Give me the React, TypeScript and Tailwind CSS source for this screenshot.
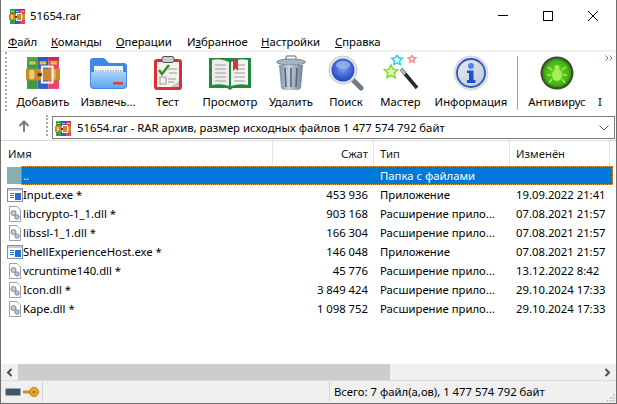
import type { ReactNode } from "react";

const FONT = "font-['Noto_Sans','Open_Sans',sans-serif]";

function RarIcon({ size }: { size: number }) {
  return (
    <svg width={size} height={size} viewBox="0 0 32 32" shapeRendering={size < 20 ? "crispEdges" : "auto"}>
      <rect x="1" y="1" width="10" height="30" fill="#3d9a45" />
      <rect x="11" y="1" width="10" height="30" fill="#2f5fc9" />
      <rect x="21" y="1" width="10" height="30" fill="#e8436a" />
      <rect x="1" y="1" width="10" height="3" fill="#4fa83f" />
      <rect x="11" y="1" width="10" height="3" fill="#3b4fb0" />
      <rect x="21" y="1" width="10" height="3" fill="#b8305a" />
      <rect x="3" y="5" width="6" height="3" fill="#e6c238" />
      <rect x="13" y="5" width="6" height="3" fill="#e6c238" />
      <rect x="23" y="5" width="6" height="3" fill="#e6c238" />
      <rect x="0" y="12" width="32" height="11" fill="#c98a2c" />
      <rect x="3" y="13" width="5" height="9" rx="2" fill="#eecb6c" />
      <rect x="24" y="13" width="4" height="9" fill="#e5b355" />
      <rect x="15" y="10" width="10" height="15" fill="none" stroke="#f4efe4" strokeWidth="2" />
      <rect x="11" y="16" width="4" height="3" fill="#5b3a12" />
    </svg>
  );
}

function FolderIcon() {
  return (
    <svg width="37" height="33" viewBox="0 0 37 33">
      <defs>
        <linearGradient id="fold" x1="0" y1="0" x2="0" y2="1">
          <stop offset="0" stopColor="#a9d3fb" />
          <stop offset="1" stopColor="#5ea6f2" />
        </linearGradient>
      </defs>
      <path d="M0 4 Q0 1 3 1 H13 Q15 1 17 4 L19 6 H34 Q37 6 37 9 V28 Q37 32 33 32 H4 Q0 32 0 28 Z" fill="#3f88e6" />
      <rect x="4" y="9" width="29" height="12" fill="#f3f6fa" />
      <path d="M5 14 H32" stroke="#9aa4b0" strokeWidth="1.5" strokeDasharray="1.5 1" />
      <path d="M1 15 H36 V28 Q36 31 33 31 H4 Q1 31 1 28 Z" fill="url(#fold)" />
      <rect x="23" y="25" width="10" height="2.5" fill="#e2403a" />
    </svg>
  );
}

function TestIcon() {
  return (
    <svg width="28" height="34" viewBox="0 0 28 34">
      <rect x="0" y="3" width="28" height="31" rx="3" fill="#dc2f38" />
      <rect x="3" y="6" width="22" height="25" fill="#f4f2ee" />
      <path d="M17 31 L25 25 V31 Z" fill="#c9c6c0" />
      <rect x="8" y="0.5" width="12" height="6" rx="2" fill="#c8cdd2" stroke="#555" strokeWidth="1" />
      <path d="M5 14 L8 18 L15 9" fill="none" stroke="#2f8f2f" strokeWidth="2.5" />
      <rect x="6" y="21" width="6" height="7" fill="none" stroke="#999" />
      <path d="M14 13 H23 M15 17 H23 M14 23 H22 M14 26 H20" stroke="#999" />
    </svg>
  );
}

function BookIcon() {
  return (
    <svg width="42" height="33" viewBox="0 0 42 33">
      <path d="M0 1 H42 V31 H24 L21 33 L18 31 H0 Z" fill="#1f8a3a" />
      <path d="M3 3 Q12 1 20 5 V29 Q12 26 3 28 Z" fill="#ececec" />
      <path d="M39 3 Q30 1 22 5 V29 Q30 26 39 28 Z" fill="#f4f4f4" />
      <path d="M6 8 H17 M6 12 H17 M6 16 H17 M6 20 H17 M6 24 H17 M29 12 H36 M29 8 H36 M25 16 H36 M25 20 H36 M25 24 H36" stroke="#b8b8b8" strokeWidth="1.4" />
      <path d="M24 2 H29 V14 L26.5 11.5 L24 14 Z" fill="#d8343f" />
    </svg>
  );
}

function TrashIcon() {
  return (
    <svg width="30" height="36" viewBox="0 0 30 36">
      <defs>
        <linearGradient id="can" x1="0" y1="0" x2="1" y2="0">
          <stop offset="0" stopColor="#7d8ea3" />
          <stop offset="0.4" stopColor="#c6d1dc" />
          <stop offset="1" stopColor="#728299" />
        </linearGradient>
      </defs>
      <rect x="10" y="1" width="10" height="4" rx="1.5" fill="none" stroke="#8a96a5" strokeWidth="1.5" />
      <ellipse cx="15" cy="7" rx="14.5" ry="3" fill="#a7b3c0" stroke="#7b8796" />
      <path d="M3 10 H27 L25 33 Q24 35 21 35 H9 Q6 35 5 33 Z" fill="url(#can)" />
      <path d="M9 13 L10 32 M15 13 V32 M21 13 L20 32" stroke="#56677c" strokeWidth="1.6" />
    </svg>
  );
}

function SearchIcon() {
  return (
    <svg width="37" height="36" viewBox="0 0 37 36">
      <defs>
        <radialGradient id="lens" cx="0.5" cy="0.4" r="0.6">
          <stop offset="0" stopColor="#8aa4ea" />
          <stop offset="0.5" stopColor="#4a72d8" />
          <stop offset="1" stopColor="#1f49bb" />
        </radialGradient>
      </defs>
      <path d="M24 24 L33 33" stroke="#717a80" strokeWidth="5" strokeLinecap="round" />
      <circle cx="15" cy="15" r="14" fill="#e4e8ec" stroke="#c2c8d0" />
      <circle cx="15" cy="15" r="11.5" fill="url(#lens)" />
      <ellipse cx="15" cy="10" rx="7" ry="4" fill="#9fb2ea" opacity="0.8" />
    </svg>
  );
}

function Star({ cx, cy, r, fill, stroke }: { cx: number; cy: number; r: number; fill: string; stroke: string }) {
  const pts: string[] = [];
  for (let i = 0; i < 10; i++) {
    const rad = i % 2 === 0 ? r : r * 0.5;
    const a = -Math.PI / 2 + (i * Math.PI) / 5;
    pts.push(`${cx + rad * Math.cos(a)},${cy + rad * Math.sin(a)}`);
  }
  return <polygon points={pts.join(" ")} fill={fill} stroke={stroke} strokeWidth="1.5" />;
}

function WizardIcon() {
  return (
    <svg width="36" height="36" viewBox="0 0 36 36">
      <path d="M18 14 L34 33" stroke="#2b2b2b" strokeWidth="3.5" />
      <path d="M18 14 L22 19" stroke="#aeb4ba" strokeWidth="3.5" />
      <Star cx={8} cy={17} r={7} fill="#d6f7a8" stroke="#7ddc2a" />
      <Star cx={14} cy={5} r={5.5} fill="#e6fbff" stroke="#32d0ee" />
      <Star cx={29} cy={4} r={4} fill="#fde4e4" stroke="#f28f98" />
    </svg>
  );
}

function InfoIcon() {
  return (
    <svg width="36" height="36" viewBox="0 0 36 36">
      <defs>
        <linearGradient id="inf" x1="0" y1="0" x2="1" y2="1">
          <stop offset="0" stopColor="#e8ebf0" />
          <stop offset="1" stopColor="#c3cad3" />
        </linearGradient>
      </defs>
      <circle cx="18" cy="18" r="17.5" fill="#d9dde2" />
      <circle cx="18" cy="18" r="14" fill="url(#inf)" stroke="#2c58c4" strokeWidth="1.8" />
      <circle cx="18" cy="11" r="3" fill="#4a86e8" />
      <path d="M14 15.5 H20.5 V25 H22.5 V28 H14 V25 H16 V18 H14 Z" fill="#1f4fcc" />
    </svg>
  );
}

function AntivirusIcon() {
  return (
    <svg width="34" height="34" viewBox="0 0 34 34">
      <defs>
        <radialGradient id="av" cx="0.5" cy="0.5" r="0.5">
          <stop offset="0" stopColor="#6fdc2c" />
          <stop offset="0.8" stopColor="#47b512" />
          <stop offset="1" stopColor="#2f8a0d" />
        </radialGradient>
      </defs>
      <circle cx="17" cy="17" r="16.5" fill="#3c4a38" />
      <circle cx="17" cy="17" r="14.5" fill="url(#av)" />
      <ellipse cx="17" cy="19" rx="5" ry="6" fill="#a6ee5a" />
      <circle cx="17" cy="11.5" r="2.5" fill="#a6ee5a" />
      <path d="M12 14 L8 11 M22 14 L26 11 M11 19 H7 M23 19 H27 M12 23 L9 27 M22 23 L25 27" stroke="#a6ee5a" strokeWidth="1.5" />
    </svg>
  );
}

function ExeIcon() {
  return (
    <svg width="16" height="14" viewBox="0 0 16 14" shapeRendering="crispEdges">
      <rect x="0.5" y="0.5" width="15" height="13" fill="#fff" stroke="#8a9099" />
      <rect x="1" y="1" width="14" height="2" fill="#c8ccd2" />
      <rect x="8" y="5" width="6" height="7" fill="#1f6fd6" />
      <rect x="3" y="5" width="4" height="1" fill="#1f6fd6" />
      <rect x="3" y="7" width="4" height="1" fill="#1f6fd6" />
      <rect x="3" y="9" width="4" height="1" fill="#1f6fd6" />
    </svg>
  );
}

function DllIcon() {
  return (
    <svg width="14" height="16" viewBox="0 0 14 16">
      <path d="M1.5 0.5 H9 L12.5 4 V15.5 H1.5 Z" fill="#fff" stroke="#9aa0a8" />
      <circle cx="5.5" cy="7" r="2.5" fill="#c3cdd8" stroke="#7d8b9b" />
      <circle cx="9" cy="11" r="2.2" fill="#b9c4d0" stroke="#7d8b9b" />
    </svg>
  );
}

function ToolItem({ label, center, children }: { label: string; center: string; children: ReactNode }) {
  return (
    <div className={`flex flex-col items-center shrink-0 ${center}`}>
      <div className="h-[38px] flex items-center justify-center">{children}</div>
      <span className="text-[11.3px] leading-[16px] whitespace-nowrap mt-[2px]">{label}</span>
    </div>
  );
}

function Gripper() {
  return <div className="w-[2px] shrink-0 self-stretch border-l-2 border-dotted border-[#a8a8a8]" />;
}

const MENU = [
  { a: "Ф", b: "айл", w: "w-[43px]" },
  { a: "К", b: "оманды", w: "w-[65px]" },
  { a: "О", b: "перации", w: "w-[71px]" },
  { a: "Из", b: "бранное", w: "w-[74px]", u: 1 },
  { a: "Н", b: "астройки", w: "w-[74px]" },
  { a: "С", b: "правка", w: "w-[60px]" },
];

const FILES = [
  { name: "Input.exe *", size: "453 936", type: "Приложение", date: "19.09.2022 21:41", exe: true },
  { name: "libcrypto-1_1.dll *", size: "903 168", type: "Расширение прило...", date: "07.08.2021 21:57" },
  { name: "libssl-1_1.dll *", size: "166 304", type: "Расширение прило...", date: "07.08.2021 21:57" },
  { name: "ShellExperienceHost.exe *", size: "146 048", type: "Приложение", date: "07.08.2021 21:57", exe: true },
  { name: "vcruntime140.dll *", size: "45 776", type: "Расширение прило...", date: "13.12.2022 8:42" },
  { name: "Icon.dll *", size: "3 849 424", type: "Расширение прило...", date: "29.10.2024 17:33" },
  { name: "Kape.dll *", size: "1 098 752", type: "Расширение прило...", date: "29.10.2024 17:33" },
];

export default function App() {
  return (
    <div className={`w-[617px] h-[404px] flex flex-col overflow-hidden bg-white text-black border-x border-b border-[#6e6e6e] ${FONT}`}>
      {/* Title bar */}
      <div className="h-[31px] shrink-0 flex items-center pl-[8px]">
        <RarIcon size={16} />
        <span className="ml-[5px] text-[11.3px] leading-none">51654.rar</span>
        <div className="ml-auto flex items-center h-full">
          <div className="w-[45px] flex justify-center">
            <div className="w-[10px] h-px bg-black" />
          </div>
          <div className="w-[45px] flex justify-center">
            <div className="w-[10px] h-[10px] border border-black" />
          </div>
          <div className="w-[46px] flex justify-center">
            <svg width="10" height="10" viewBox="0 0 10 10">
              <path d="M0 0 L10 10 M10 0 L0 10" stroke="#000" strokeWidth="1" />
            </svg>
          </div>
        </div>
      </div>

      {/* Menu */}
      <div className="h-[19px] shrink-0 flex items-center pl-[7px] pt-[2px] text-[11.3px] leading-none">
        {MENU.map((m) => (
          <div key={m.a} className={`${m.w} shrink-0 whitespace-nowrap`}>
            {m.u ? (
              <>
                И<span className="underline">з</span>
                {m.b}
              </>
            ) : (
              <>
                <span className="underline">{m.a}</span>
                {m.b}
              </>
            )}
          </div>
        ))}
      </div>

      {/* Toolbar */}
      <div className="h-[61px] shrink-0 flex border-t-2 border-[#f0f0f0] pl-[4px] relative">
        <Gripper />
        <div className="flex pt-[2px]">
          <ToolItem label="Добавить" center="w-[64px] ml-[4px]"><RarIcon size={34} /></ToolItem>
          <ToolItem label="Извлечь..." center="w-[66px]"><FolderIcon /></ToolItem>
          <ToolItem label="Тест" center="w-[53px]"><TestIcon /></ToolItem>
          <ToolItem label="Просмотр" center="w-[72px]"><BookIcon /></ToolItem>
          <ToolItem label="Удалить" center="w-[50px]"><TrashIcon /></ToolItem>
          <ToolItem label="Поиск" center="w-[60px]"><SearchIcon /></ToolItem>
          <ToolItem label="Мастер" center="w-[49px]"><WizardIcon /></ToolItem>
          <ToolItem label="Информация" center="w-[92px]"><InfoIcon /></ToolItem>
          <div className="w-px h-[54px] mt-[2px] bg-[#a0a0a0] shrink-0" />
          <ToolItem label="Антивирус" center="w-[78px]"><AntivirusIcon /></ToolItem>
          <span className="text-[11.3px] leading-[16px] mt-[40px] ml-[2px]">I</span>
        </div>
        <svg className="absolute right-[3px] top-[3px]" width="8" height="6" viewBox="0 0 8 6">
          <path d="M0.5 0.5 L3 3 L0.5 5.5 M4.5 0.5 L7 3 L4.5 5.5" fill="none" stroke="#6f7a99" />
        </svg>
      </div>

      {/* Address row */}
      <div className="h-[30px] shrink-0 flex items-stretch border-b border-[#d9d9d9] pl-[4px] pr-[1px]">
        <div className="w-[37px] shrink-0 flex items-center justify-center">
          <svg width="12" height="12" viewBox="0 0 12 12">
            <path d="M6 12 V1.5 M1.5 6 L6 1.5 L10.5 6" fill="none" stroke="#7c7c7c" strokeWidth="2" />
          </svg>
        </div>
        <div className="w-[4px]" />
        <div className="my-[4px] flex"><Gripper /></div>
        <div className="flex-1 ml-[4px] mt-[5px] mb-[1px] border border-[#7a7a7a] flex items-center pl-[2px] pr-[5px]">
          <RarIcon size={16} />
          <span className="ml-[6px] pt-[1px] text-[11.3px] leading-none whitespace-nowrap">51654.rar - RAR архив, размер исходных файлов 1 477 574 792 байт</span>
          <svg className="ml-auto" width="10" height="6" viewBox="0 0 10 6">
            <path d="M0.5 0.5 L5 5 L9.5 0.5" fill="none" stroke="#606060" />
          </svg>
        </div>
      </div>

      {/* Column header */}
      <div className="h-[25px] shrink-0 flex text-[11.3px] leading-none text-[#1a1a1a]">
        <div className="w-[272px] shrink-0 pl-[7px] pt-px flex items-center border-r border-[#e5e5e5]">Имя</div>
        <div className="w-[101px] shrink-0 pr-[5px] pt-px flex items-center justify-end border-r border-[#e5e5e5]">Сжат</div>
        <div className="w-[136px] shrink-0 pl-[6px] pt-px flex items-center border-r border-[#e5e5e5]">Тип</div>
        <div className="w-[100px] shrink-0 pl-[6px] pt-px flex items-center border-r border-[#e5e5e5]">Изменён</div>
      </div>

      {/* File list */}
      <div className="flex-1 min-h-0 text-[11.3px] leading-none">
        <div className="h-[19px] flex">
          <div className="w-[20px] shrink-0 pl-[6px] pt-px">
            <div className="w-[14px] h-[17px] bg-[#86b0ae]" />
          </div>
          <div className="w-[592px] shrink-0 flex items-center bg-[#0078d7] text-white outline-1 -outline-offset-1 outline-dotted outline-[#f0a040]">
            <div className="w-[252px] shrink-0 pl-[2px]">..</div>
            <div className="w-[101px] shrink-0" />
            <div className="pl-[6px]">Папка с файлами</div>
          </div>
        </div>
        {FILES.map((f) => (
          <div key={f.name} className="h-[19px] flex items-center">
            <div className="w-[272px] shrink-0 flex items-center">
              <div className="w-[22px] shrink-0 flex justify-center pl-[5px]">{f.exe ? <ExeIcon /> : <DllIcon />}</div>
              <span className="whitespace-nowrap">{f.name}</span>
            </div>
            <div className="w-[101px] shrink-0 pr-[6px] text-right whitespace-nowrap">{f.size}</div>
            <div className="w-[136px] shrink-0 pl-[6px] whitespace-nowrap">{f.type}</div>
            <div className="pl-[6px] whitespace-nowrap">{f.date}</div>
          </div>
        ))}
      </div>

      {/* Horizontal scrollbar */}
      <div className="h-[16px] shrink-0 flex bg-[#f0f0f0]">
        <div className="w-[17px] shrink-0 flex items-center justify-center">
          <svg width="7" height="9" viewBox="0 0 7 9">
            <path d="M5.5 1 L2 4.5 L5.5 8" fill="none" stroke="#505050" strokeWidth="2" />
          </svg>
        </div>
        <div className="w-[372px] shrink-0 bg-[#cdcdcd]" />
        <div className="ml-auto w-[17px] shrink-0 flex items-center justify-center">
          <svg width="7" height="9" viewBox="0 0 7 9">
            <path d="M1.5 1 L5 4.5 L1.5 8" fill="none" stroke="#505050" strokeWidth="2" />
          </svg>
        </div>
      </div>

      {/* Status bar */}
      <div className="h-[23px] shrink-0 flex items-stretch bg-[#f0f0f0] border-t border-[#dcdcdc] text-[11.3px] leading-none">
        <div className="w-[42px] shrink-0 flex items-center pl-[4px] gap-[2px] border-r border-[#d4d4d4] my-px">
          <svg width="16" height="8" viewBox="0 0 16 8">
            <rect x="0.5" y="0.5" width="15" height="7" rx="1" fill="#4a5560" stroke="#8fa8c8" />
          </svg>
          <svg width="16" height="10" viewBox="0 0 16 10">
            <rect x="0" y="3.5" width="9" height="3" fill="#d98c1a" />
            <circle cx="11" cy="5" r="4.5" fill="#eda92c" stroke="#b87714" />
            <circle cx="11" cy="5" r="1.5" fill="#b87714" />
          </svg>
        </div>
        <div className="w-[287px] shrink-0 border-r border-[#d4d4d4] my-px" />
        <div className="flex-1 pl-[4px] flex items-center whitespace-nowrap">Всего: 7 файл(а,ов), 1 477 574 792 байт</div>
        <svg className="self-end mb-[1px] mr-[1px]" width="9" height="9" viewBox="0 0 9 9">
          <path d="M7 1 h1.5 v1.5 h-1.5 z M4 4 h1.5 v1.5 h-1.5 z M7 4 h1.5 v1.5 h-1.5 z M1 7 h1.5 v1.5 h-1.5 z M4 7 h1.5 v1.5 h-1.5 z M7 7 h1.5 v1.5 h-1.5 z" fill="#b4b4b4" />
        </svg>
      </div>
    </div>
  );
}
